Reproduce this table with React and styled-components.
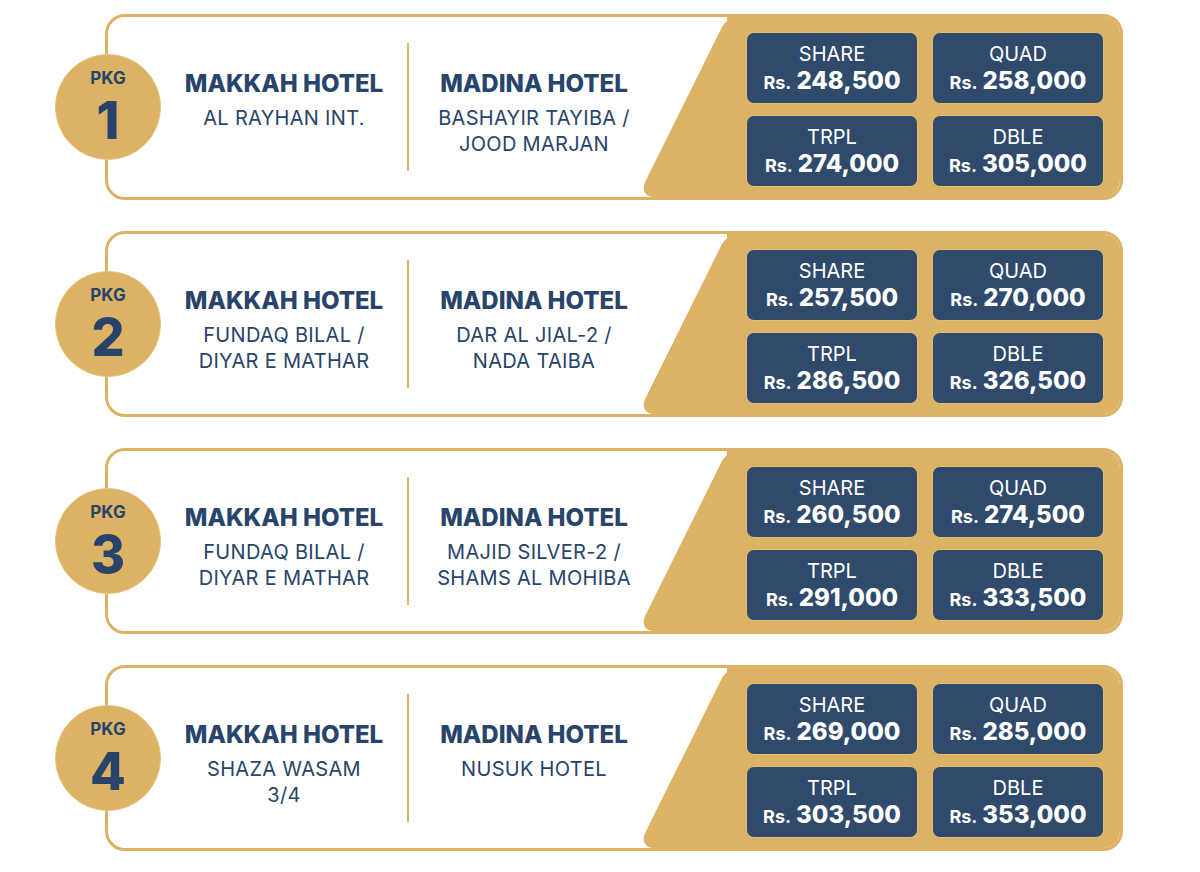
import styled, { createGlobalStyle } from "styled-components";

const GlobalStyle = createGlobalStyle`
  body {
    margin: 0;
    background: #ffffff;
    font-family: "Inter", "Noto Sans", sans-serif;
  }
`;

const NAVY = "#28446a";
const GOLD = "#dcb264";
const BOX = "#2f4a6b";

const Page = styled.div`
  width: 1200px;
  min-height: 872px;
  padding: 14px 0 0 55px;
  box-sizing: border-box;
  display: flex;
  flex-direction: column;
  gap: 31px;
`;

const Row = styled.div`
  display: flex;
  align-items: center;
  width: 1068px;
`;

const Badge = styled.div`
  width: 106px;
  height: 106px;
  flex-shrink: 0;
  border-radius: 50%;
  background: ${GOLD};
  border: 1.5px solid #e8c47e;
  box-sizing: border-box;
  padding-top: 6px;
  margin-right: -56px;
  position: relative;
  z-index: 1;
  display: flex;
  flex-direction: column;
  align-items: center;
  justify-content: center;
  color: ${NAVY};
  font-weight: 700;

  span {
    font-size: 17px;
    line-height: 21px;
  }

  strong {
    font-size: 52px;
    line-height: 63px;
    font-weight: 800;
  }
`;

const Card = styled.div`
  flex: 1;
  height: 186px;
  box-sizing: border-box;
  border: 3px solid ${GOLD};
  border-radius: 20px;
  overflow: hidden;
  display: flex;
  padding-left: 53px;
  background: #fff;
`;

const HotelCol = styled.div`
  width: ${(p) => p.$w}px;
  flex-shrink: 0;
  padding-top: 52px;
  text-align: center;
  color: ${NAVY};

  h3 {
    margin: 0 0 6px;
    font-size: 24px;
    line-height: 30px;
    font-weight: 800;
  }

  p {
    margin: 0;
    font-size: 20px;
    line-height: 26px;
    font-weight: 400;
    letter-spacing: 0.3px;
  }
`;

const Divider = styled.div`
  width: 2px;
  height: 128px;
  background: ${GOLD};
  align-self: center;
  flex-shrink: 0;
`;

const PricePanel = styled.div`
  margin-left: auto;
  width: 393px;
  flex-shrink: 0;
  position: relative;
  background: ${GOLD};
  padding: 14px 14px 10px 19px;
  box-sizing: border-box;
  display: grid;
  grid-template-columns: 172px 172px;
  grid-template-rows: 72px 72px;
  column-gap: 14px;
  row-gap: 11px;
  align-content: center;

  &::before {
    content: "";
    position: absolute;
    top: 0;
    bottom: 0;
    left: 0;
    width: 120px;
    background: ${GOLD};
    border-radius: 10px 0 0 16px;
    transform-origin: top left;
    transform: skewX(-26.4deg);
  }
`;

const PriceBox = styled.div`
  position: relative;
  z-index: 1;
  background: ${BOX};
  border: 1px solid #e2bd74;
  border-radius: 8px;
  display: flex;
  flex-direction: column;
  align-items: center;
  justify-content: center;
  color: #fff;

  span {
    font-size: 20px;
    line-height: 22px;
    font-weight: 400;
    margin-top: 3px;
  }

  div {
    margin-top: 2px;
    display: flex;
    align-items: baseline;
    gap: 5px;
    font-weight: 700;
  }

  small {
    font-size: 18px;
  }

  b {
    font-size: 24px;
    line-height: 28px;
    font-weight: 800;
  }
`;

const packages = [
  {
    id: 1,
    makkah: ["AL RAYHAN INT."],
    madina: ["BASHAYIR TAYIBA /", "JOOD MARJAN"],
    prices: ["248,500", "258,000", "274,000", "305,000"],
  },
  {
    id: 2,
    makkah: ["FUNDAQ BILAL /", "DIYAR E MATHAR"],
    madina: ["DAR AL JIAL-2 /", "NADA TAIBA"],
    prices: ["257,500", "270,000", "286,500", "326,500"],
  },
  {
    id: 3,
    makkah: ["FUNDAQ BILAL /", "DIYAR E MATHAR"],
    madina: ["MAJID SILVER-2 /", "SHAMS AL MOHIBA"],
    prices: ["260,500", "274,500", "291,000", "333,500"],
  },
  {
    id: 4,
    makkah: ["SHAZA WASAM", "3/4"],
    madina: ["NUSUK HOTEL"],
    prices: ["269,000", "285,000", "303,500", "353,000"],
  },
];

const labels = ["SHARE", "QUAD", "TRPL", "DBLE"];

const App = () => {
  return (
    <>
      <GlobalStyle />
      <Page>
        {packages.map((pkg) => (
          <Row key={pkg.id}>
            <Badge>
              <span>PKG</span>
              <strong>{pkg.id}</strong>
            </Badge>
            <Card>
              <HotelCol $w={246}>
                <h3>MAKKAH HOTEL</h3>
                {pkg.makkah.map((line) => (
                  <p key={line}>{line}</p>
                ))}
              </HotelCol>
              <Divider />
              <HotelCol $w={250}>
                <h3>MADINA HOTEL</h3>
                {pkg.madina.map((line) => (
                  <p key={line}>{line}</p>
                ))}
              </HotelCol>
              <PricePanel>
                {pkg.prices.map((price, i) => (
                  <PriceBox key={labels[i]}>
                    <span>{labels[i]}</span>
                    <div>
                      <small>Rs.</small>
                      <b>{price}</b>
                    </div>
                  </PriceBox>
                ))}
              </PricePanel>
            </Card>
          </Row>
        ))}
      </Page>
    </>
  );
};

export default App;
